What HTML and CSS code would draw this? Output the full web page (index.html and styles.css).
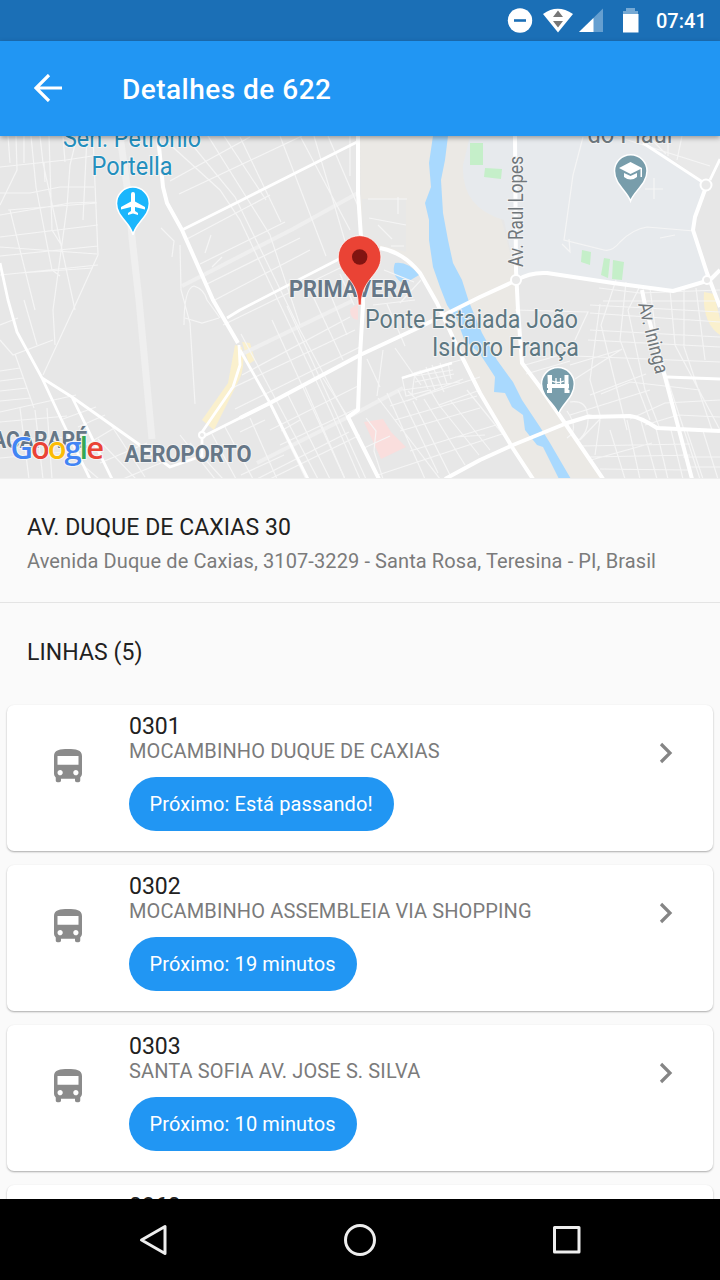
FILE: index.html
```html
<!DOCTYPE html>
<html lang="pt-BR">
<head>
<meta charset="utf-8">
<title>Detalhes de 622</title>
<link rel="stylesheet" href="styles.css">
</head>
<body>
<div class="screen">
  <div class="status">
    <svg class="status-icons" viewBox="500 0 148 41">
      <circle cx="520" cy="20.500" r="12.200" fill="#fff"/><path d="M514 20.500h12" stroke="#1b6fb6" stroke-width="2.600"/>
      <path d="M543 14Q557.500 3.500 573 14L558 32.500Z" fill="#fff"/><path d="M553 17l5-6.500 5 6.500zM553 21h10l-5 6.500z" fill="#777"/>
      <path d="M603 8.500V32h-24z" fill="#659fd0"/><path d="M593.500 18v14H579z" fill="#fff"/>
      <path d="M626 8h9v3h3v3h-15v-3h3z" fill="#76a9d4"/><path d="M623 14h15.500v18.500H623z" fill="#fff"/>
    </svg>
    <span class="clock">07:41</span>
  </div>
  <header class="appbar">
    <svg class="back" viewBox="0 0 28 28"><path d="M15 1L2 14l13 13M2.500 14H28" fill="none" stroke="#fff" stroke-width="3.200"/></svg>
    <h1>Detalhes de 622</h1>
  </header>
  <main>
    <svg class="map" viewBox="0 136 720 342">
      <rect y="136" width="720" height="343" fill="#e7e7e7"/>
      <path d="M360 136H480L517 280L523 363L602 479H532L480 393L437 303L420 273L403 257L361 240Z" fill="#ebe9e5"/>
      <path d="M362 199H406V252L362 240Z" fill="#e8e8e7"/>
      <path d="M470 136H640L704 184L694 230L708 279L673 291L547 273L516 276L504 220Q461 208 463 165Z" fill="#e7eaed"/>
      <path d="M640 136H720V165L706 184Z" fill="#e9e9e9"/>
      <path d="M433 136L429 163L431 187L425 203L429 220L429 240L433 267L440 287L447 305L457 320L464 339L480 354L495 377L494 392L505 393L512 407L523 415L525 430L537 445L543 447L559 479H571L550 443L540 427L522 400L513 382L497 360L482 333L469 302L462 280L453 263L448 240L443 213L441 180L445 160L448 136Z" fill="#a9d9fe"/>
      <path d="M395 263Q408 261 419 275L404 284Q390 276 395 263Z" fill="#a9d9fe"/>
      <path d="M470 143h13v22h-13zM485 168l17 1-1 10-17-2zM582 250l9 2-1 13-9-3zM604 258l6 1-2 19-7-3zM613 260l11 2-2 18-10-1z" fill="#c5efc9"/>
      <path d="M364 422L383 419L391 432L406 447L381 459Z" fill="#fadedd"/>
      <path d="M350 309L358 304V320Q350 320 350 309Z" fill="#f9dedd"/>
      <path d="M235 345L242 347Q246 368 238 382L214 430L202 420L228 383ZM242 342l8 1 5 17-6 4zM704 292l10 2 6 25v16q-18-12-16-43z" fill="#faf0cd"/>
      <g fill="none" stroke="#efefef">
        <path d="M120 136L129 200L132 238L139 300L152 439" stroke-width="7"/>
        <path d="M257 463L358 412L403 388M358 193L293 229L182 286M240 355L352 301" stroke-width="4"/>
      </g>
      <g fill="none" stroke="#f5f5f5" stroke-width="1.200">
        <path d="M0 167L66 160L92 156M0 193L30 193L60 187L94 187M0 215L70 203L96 202M8 210L97 203M0 237L98 225M0 256L98 246M0 275L98 265M0 247L97 254M20 273L93 268M93 136L98 255L73 310L43 375"/>
        <path d="M8 136L10 163M16 136L17 170L0 205M24 136V163M31 136L36 187L52 270L60 276M40 136L43 163L61 245L75 310M45 182L44 163M49 136L52 230L62 246M63 136L65 162M77 136L70 165L67 207L53 310L55 345M87 136L83 220M10 210L35 310"/>
        <path d="M0 325L18 318M0 340L13 355L53 340M24 300L37 345M0 371L20 368M0 381L23 378M0 391L27 388M0 401L31 398M0 412L76 395M15 354L34 408M47 408L52 479M0 422L67 416M0 441L70 437M0 458L85 450M20 408L29 479M35 410L43 479M57 443L99 479M63 419L96 407M78 427L105 415M79 449L116 427M98 439L136 479M111 425L145 477M100 463L147 443M123 479L168 460"/>
        <path d="M165 140L220 190L240 220L330 410L360 479M185 136L235 197L300 330L380 479M208 136L270 235L300 325M224 136L266 200M240 137L281 222M280 136L326 256M300 136L350 230M314 136L352 265M328 136L358 206M350 136V176"/>
        <path d="M170 181L250 137M179 194L302 136M187 239L270 195M200 264L285 222M205 285L300 238M213 301L310 250M223 325L344 266M242 375L350 317M230 389L355 330M235 409L360 347M270 430L360 385M280 445L360 407M257 479L349 432M270 479L360 435M205 253L211 235M212 267L222 257M241 334L318 479M272 320L345 479M287 306L366 479M310 290L343 360M325 281L347 335M340 274L354 305"/>
        <path d="M180 435L215 479M190 443L223 479M212 434L236 479M225 427L253 479M250 418L277 479M270 405L306 479M288 395L330 479M305 387L345 479M323 378L348 417M240 432L265 420M281 431L300 420M241 475L284 455M180 245L181 290L190 323L195 404M184 325Q184 288 194 286Q204 289 207 300L220 318M185 318L202 323L219 318M161 228L174 241L172 257"/>
        <path d="M368 199H407M398 197V214M369 218L406 225M378 225L392 239M391 246H404M384 270L414 282M400 303L421 280M387 304L405 346M373 305L415 300M383 350L377 396M367 359L380 387M395 348L421 385"/>
        <path d="M402 378L417 372L464 359M402 377L406 396L430 390L439 405L480 390M415 372L412 394M420 370L428 389M426 367L435 390M432 365L444 392M440 363L447 384M448 363L451 379M403 390L460 382M407 401L463 379M415 382L454 374M408 391L417 400M414 376L453 370M378 398L440 479M387 393L425 479M398 390L438 473M390 406L480 377M395 420L477 396M400 431L480 408M410 451L496 425M378 475L505 433M366 418L376 431L374 451L383 479M364 448L390 436M413 401L450 475M424 399L465 465M439 405L479 455M450 400L490 450M467 390L510 443M455 437L485 435"/>
        <path d="M583 137L573 175L564 240L604 250Q612 252 620 242Q633 229 647 227L694 231M569 239L570 252L562 244M654 178V199M645 189H663M660 238L675 235M615 136L710 166M648 136L666 154M668 136V156M682 136L677 160"/>
        <path d="M515 310L588 312L575 340M590 305L720 312M590 313L720 322M590 330L720 337M588 340L720 347M575 356L720 362M570 365L620 350M575 379L622 349M590 395L646 374M570 415L650 390M525 365L560 355M526 374L570 361M600 304L590 380L600 415M616 280L601 325L627 430M626 282L620 340L650 420M639 288L628 310L645 390L660 429M650 288L658 350L700 479M670 290L675 345L720 430M684 289V347L712 430M696 288L705 360M599 288L640 293L720 290M603 301L720 301"/>
        <path d="M570 402Q585 400 587 412Q591 429 579 440L569 431M587 414L601 418L580 440M567 411Q580 430 567 438M580 446L690 444M590 457L690 455M600 469L690 470M610 430L625 479M627 420L640 479M641 421L657 479M656 428L668 479M671 430L683 479M687 431L703 479M703 431L718 479M591 460L652 443M683 457H720M690 467H720M630 419L665 403L720 400M601 394L630 382L700 390M600 420L595 455M645 425L678 415L720 417"/>
      </g>
      <g fill="none" stroke="#fff" stroke-width="2.800" stroke-linejoin="round">
        <path d="M0 263L8 300L17 332L42 378L63 423L90 479M42 378L72 397L137 443L170 467L202 456L202 435M72 397L112 479M182 230L240 201L357 142M227 318L240 310L343 257M202 437L240 418L270 403M240 350L270 403L308 479M200 435L233 387L240 365L239 345"/>
        <path d="M643 143L704 183M710 180L720 159M667 377L720 379M402 378L452 363"/>
      </g>
      <g fill="none" stroke="#fff" stroke-width="4" stroke-linejoin="round">
        <path d="M158 136L163 187L167 203L182 230L213 300L238 343M358 136L358 193L361 237L363 305L360 355L358 410L348 417L379 479"/>
        <path d="M380 248Q403 252 420 273L437 303L462 357L480 393L512 447L533 479M240 418L270 403L360 355L420 327L480 297L517 280Q530 272 547 273L613 283L673 291L710 280L720 270"/>
        <path d="M515 136L516 270L518 310L522 363L540 387L558 413L603 479M445 479L480 460L513 445L567 423L587 417L630 416Q640 417 657 428L720 431M706 187L695 217L693 230L707 273L720 307M642 290L645 305L665 377L692 479"/>
      </g>
      <g fill="#e9e9e9" stroke="#fff" stroke-width="2"><circle cx="706" cy="185" r="5.500"/><circle cx="516" cy="280" r="5"/><circle cx="707" cy="280" r="4"/><circle cx="202" cy="435" r="3"/></g>
      <g class="map-label poi" text-anchor="middle">
        <g fill="#248fbe"><text x="132" y="147" textLength="138" lengthAdjust="spacingAndGlyphs">Sen. Petrônio</text><text x="132" y="175" textLength="81" lengthAdjust="spacingAndGlyphs">Portella</text></g>
        <text x="630" y="143" textLength="85" lengthAdjust="spacingAndGlyphs" fill="#707a80">do Piauí</text>
        <g fill="#5e7882"><text x="471.500" y="328" textLength="213" lengthAdjust="spacingAndGlyphs">Ponte Estaiada João</text><text x="505.500" y="356" textLength="147" lengthAdjust="spacingAndGlyphs">Isidoro França</text></g>
      </g>
      <g class="map-label area" fill="#667787">
        <text x="289" y="297" textLength="123" lengthAdjust="spacingAndGlyphs">PRIMAVERA</text><text x="124.500" y="462" textLength="127" lengthAdjust="spacingAndGlyphs">AEROPORTO</text><text x="-8" y="448" textLength="95" lengthAdjust="spacingAndGlyphs">ACARAPÉ</text>
      </g>
      <g class="map-label street" fill="#70777b">
        <text transform="translate(523 267) rotate(-90)" textLength="111" lengthAdjust="spacingAndGlyphs">Av. Raul Lopes</text>
        <text transform="translate(638 304) rotate(76)" textLength="73" lengthAdjust="spacingAndGlyphs">Av. Ininga</text>
      </g>
      <g stroke="#fff" stroke-width="1.500">
        <path d="M133 235C131 223 116.500 217 116.500 203.500A16.400 16.400 0 1 1 149.300 203.500C149.300 217 135 223 133 235Z" fill="#1bb6fc"/>
        <path d="M630.500 201C627 191 614.500 184 614.500 171A16.200 16.200 0 1 1 647 171C647 184 634 191 630.500 201Z" fill="#789dab"/>
        <path d="M558.500 414C555 404 541.500 397 541.500 384A16.400 16.400 0 1 1 574.300 384C574.300 397 562 404 558.500 414Z" fill="#789dab"/>
      </g>
      <path d="M133 192q2 0 2 2v7.500l10 5.500v2.500l-10-2.500v4l3 2v2l-5-1.500-5 1.500v-2l3-2v-4l-10 2.500V207l10-5.500V194q0-2 2-2z" fill="#fff"/>
      <path d="M619 168l11.500-6 11.500 6v9h-1.500v-8l-10 5zM624 173l6.500 3 6.500-3v4q-6.500 5-13 0z" fill="#fff"/>
      <path d="M547.500 375h4.500v18h-5v-3h1zM564.500 375h4v15h1v3h-5zM547 384h22v4h-22z" fill="#fff"/><path d="M552 381q6 3 12 0M556 378v8M560.500 378v8" fill="none" stroke="#fff" stroke-width="1.300"/>
      <path d="M358.300 305C358.300 278 338.300 276 338.300 257A21.300 21.300 0 1 1 380.900 257C380.900 276 361.200 278 361.200 305Z" fill="#ea4335" stroke="#fff" stroke-width=".7"/>
      <circle cx="359.700" cy="257" r="7.700" fill="#811411"/>
      <text class="google" x="10.500" y="458.500" textLength="93.500"><tspan fill="#4285f4">G</tspan><tspan fill="#ea4335">o</tspan><tspan fill="#fbbc05">o</tspan><tspan fill="#4285f4">g</tspan><tspan fill="#34a853">l</tspan><tspan fill="#ea4335">e</tspan></text>
    </svg>
    <section class="stop"><h2>AV. DUQUE DE CAXIAS 30</h2><p>Avenida Duque de Caxias, 3107-3229 - Santa Rosa, Teresina - PI, Brasil</p></section>
    <h2 class="lines-title">LINHAS (5)</h2>
    <div class="cards">
      <article class="card">
        <svg class="bus" viewBox="4 2 16 20"><path d="M4 16c0 .88.39 1.670 1 2.220V20c0 .55.45 1 1 1h1c.55 0 1-.45 1-1v-1h8v1c0 .55.45 1 1 1h1c.55 0 1-.45 1-1v-1.780c.61-.55 1-1.340 1-2.220V6c0-3.500-3.580-4-8-4s-8 .5-8 4v10zm3.500 1c-.83 0-1.500-.67-1.500-1.500S6.670 14 7.500 14s1.500.67 1.500 1.500S8.330 17 7.500 17zm9 0c-.83 0-1.500-.67-1.500-1.500s.67-1.500 1.500-1.500 1.500.67 1.500 1.500-.67 1.500-1.500 1.500zm1.500-6H6V6h12v5z"/></svg>
        <div class="info"><h3>0301</h3><p>MOCAMBINHO DUQUE DE CAXIAS</p><span class="pill">Próximo: Está passando!</span></div>
        <svg class="chevron" viewBox="0 0 14 22"><path d="M2 2l9 9-9 9"/></svg>
      </article>
      <article class="card">
        <svg class="bus" viewBox="4 2 16 20"><path d="M4 16c0 .88.39 1.670 1 2.220V20c0 .55.45 1 1 1h1c.55 0 1-.45 1-1v-1h8v1c0 .55.45 1 1 1h1c.55 0 1-.45 1-1v-1.780c.61-.55 1-1.340 1-2.220V6c0-3.500-3.580-4-8-4s-8 .5-8 4v10zm3.500 1c-.83 0-1.500-.67-1.500-1.500S6.670 14 7.500 14s1.500.67 1.500 1.500S8.330 17 7.500 17zm9 0c-.83 0-1.500-.67-1.500-1.500s.67-1.500 1.500-1.500 1.500.67 1.500 1.500-.67 1.500-1.500 1.500zm1.500-6H6V6h12v5z"/></svg>
        <div class="info"><h3>0302</h3><p>MOCAMBINHO ASSEMBLEIA VIA SHOPPING</p><span class="pill">Próximo: 19 minutos</span></div>
        <svg class="chevron" viewBox="0 0 14 22"><path d="M2 2l9 9-9 9"/></svg>
      </article>
      <article class="card">
        <svg class="bus" viewBox="4 2 16 20"><path d="M4 16c0 .88.39 1.670 1 2.220V20c0 .55.45 1 1 1h1c.55 0 1-.45 1-1v-1h8v1c0 .55.45 1 1 1h1c.55 0 1-.45 1-1v-1.780c.61-.55 1-1.340 1-2.220V6c0-3.500-3.580-4-8-4s-8 .5-8 4v10zm3.500 1c-.83 0-1.500-.67-1.500-1.500S6.670 14 7.500 14s1.500.67 1.500 1.500S8.330 17 7.500 17zm9 0c-.83 0-1.500-.67-1.500-1.500s.67-1.500 1.500-1.500 1.500.67 1.500 1.500-.67 1.500-1.500 1.500zm1.500-6H6V6h12v5z"/></svg>
        <div class="info"><h3>0303</h3><p>SANTA SOFIA AV. JOSE S. SILVA</p><span class="pill">Próximo: 10 minutos</span></div>
        <svg class="chevron" viewBox="0 0 14 22"><path d="M2 2l9 9-9 9"/></svg>
      </article>
      <article class="card"><div class="bus"></div><div class="info"><h3>0360</h3></div></article>
    </div>
  </main>
  <nav class="nav">
    <svg viewBox="0 0 36 36"><path d="M30 4.500v27L6.500 18z"/></svg>
    <svg viewBox="0 0 36 36"><circle cx="18" cy="18" r="14.500"/></svg>
    <svg viewBox="0 0 36 36"><rect x="5.500" y="5.500" width="24.500" height="24.500"/></svg>
  </nav>
</div>
</body>
</html>
```

FILE: styles.css
```css
* { box-sizing: border-box; }
body, h1, h2, h3, p { margin: 0; font-weight: 400; }
body { background: #fafafa; font-family: Roboto, sans-serif; color: #212121; }
svg { display: block; flex: none; }
.screen { width: 720px; height: 1280px; overflow: hidden; display: flex; flex-direction: column; }
.status { height: 41px; flex: none; background: #1b6fb6; display: flex; justify-content: flex-end; align-items: center; padding-right: 14px; gap: 8px; color: #fff; }
.status-icons { width: 148px; height: 41px; }
.clock { width: 50px; font-size: 20px; font-weight: 500; line-height: 41px; padding-top: 1px; white-space: nowrap; }
.appbar { height: 95px; flex: none; background: #2196f3; display: flex; align-items: center; padding-left: 34px; gap: 60px; box-shadow: 0 2px 5px rgba(0,0,0,.35); z-index: 1; }
.back { width: 28px; height: 28px; margin-top: -1px; }
h1 { font-size: 28px; letter-spacing: .48px; font-weight: 500; color: #fff; white-space: nowrap; padding-top: 1px; }
main { flex: 1; min-height: 0; overflow: hidden; }
.map { width: 720px; height: 343px; border-bottom: 1px solid #eee; }
.map-label { font-family: Roboto, sans-serif; paint-order: stroke; stroke: #f3f3f3; stroke-width: 2px; }
.poi { font-size: 25.500px; }
.area { font-size: 23.500px; font-weight: 700; }
.street { font-size: 20px; }
.google { font: 600 31px "Open Sans", sans-serif; paint-order: stroke; stroke: #f5f5f5; stroke-width: 2px; }
.stop { height: 124px; padding: 35px 27px 0; border-bottom: 1px solid #e4e4e4; }
h2 { font-size: 23px; letter-spacing: .07px; line-height: 28px; white-space: nowrap; }
.stop p { font-size: 20px; letter-spacing: .1px; line-height: 24px; margin-top: 7px; color: #7b7b7b; white-space: nowrap; }
.lines-title { padding: 36px 27px 0; height: 102px; }
.cards { display: flex; flex-direction: column; gap: 14px; padding: 0 7px; }
.card { height: 146px; flex: none; background: #fff; border-radius: 7px; box-shadow: 0 1px 2px rgba(0,0,0,.32); display: flex; align-items: flex-start; }
.bus { width: 28px; height: 35px; margin: 44px 0 0 47px; fill: #8b8b8b; }
.info { flex: 1; padding: 8px 0 0 47px; }
h3 { font-size: 23px; line-height: 27px; }
.info p { font-size: 20px; letter-spacing: .12px; line-height: 23px; color: #7b7b7b; white-space: nowrap; }
.pill { display: inline-flex; align-items: center; height: 54px; margin-top: 14px; padding: 0 21px 0 20.500px; border-radius: 27px; background: #2196f3; color: #fff; font-size: 20px; letter-spacing: .12px; white-space: nowrap; }
.chevron { width: 14px; height: 22px; margin: 37px 40px 0 0; fill: none; stroke: #858585; stroke-width: 3.200; }
.nav { height: 81px; flex: none; background: #000; display: flex; align-items: center; justify-content: center; gap: 171px; }
.nav svg { width: 36px; height: 36px; fill: none; stroke: #eee; stroke-width: 3; stroke-linejoin: round; }
```
